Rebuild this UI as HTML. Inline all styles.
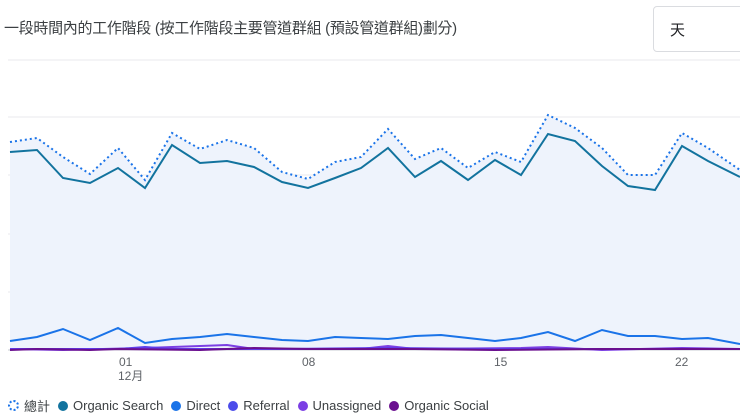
<!DOCTYPE html>
<html><head><meta charset="utf-8"><style>
body{margin:0;width:740px;height:418px;overflow:hidden;background:#fff;font-family:"Liberation Sans","Noto Sans CJK TC",sans-serif;}
.t{position:absolute;left:4px;top:17px;font-size:15px;color:#3c4043;letter-spacing:-0.3px;}
.sel{position:absolute;left:653px;top:6px;width:100px;height:46px;border:1px solid #dadce0;border-radius:4px;box-sizing:border-box;}
.sel span{position:absolute;left:16px;top:12px;font-size:15px;color:#202124;}
.lg{position:absolute;top:396px;left:6px;font-size:13px;color:#3c4043;display:flex;align-items:center;}
.lg i{display:inline-block;width:10px;height:10px;border-radius:50%;margin:0 5px 0 8px;}
</style></head><body>
<div class="t">一段時間內的工作階段 (按工作階段主要管道群組 (預設管道群組)劃分)</div>
<div class="sel"><span>天</span></div>
<svg width="740" height="418" style="position:absolute;left:0;top:0">
<line x1="8" y1="60" x2="740" y2="60" stroke="#e8eaed"/>
<line x1="8" y1="117" x2="740" y2="117" stroke="#e8eaed"/>
<line x1="8" y1="175" x2="740" y2="175" stroke="#e8eaed"/>
<line x1="8" y1="234" x2="740" y2="234" stroke="#e8eaed"/>
<line x1="8" y1="292" x2="740" y2="292" stroke="#e8eaed"/>
<polygon fill="#eef3fc" points="10,142 37,138 63,157 90,174 118,148 145,180 172,133 200,149 227,140 254,148 282,172 308,179 335,162 361,157 388,129 415,159 441,148 468,168 495,152 521,162 548,115 575,128 602,148 628,175 655,175 682,133 708,148 740,170 740,350 10,350"/>
<line x1="8" y1="350" x2="740" y2="350" stroke="#c8cdd3"/>
<polyline fill="none" stroke="#1a73e8" stroke-width="2" stroke-dasharray="2,3" points="10,142 37,138 63,157 90,174 118,148 145,180 172,133 200,149 227,140 254,148 282,172 308,179 335,162 361,157 388,129 415,159 441,148 468,168 495,152 521,162 548,115 575,128 602,148 628,175 655,175 682,133 708,148 740,170"/>
<polyline fill="none" stroke="#12739e" stroke-width="2" points="10,152 37,150 63,178 90,183 118,168 145,188 172,145 200,163 227,161 254,167 282,182 308,188 335,178 361,168 388,148 415,177 441,161 468,180 495,160 521,175 548,134 575,141 602,166 628,186 655,190 682,146 708,161 740,177"/>
<polyline fill="none" stroke="#1a73e8" stroke-width="2" points="10,341 37,337 63,329 90,340 118,328 145,343 172,339 200,337 227,334 254,337 282,340 308,341 335,337 361,338 388,339 415,336 441,335 468,338 495,341 521,338 548,332 575,341 602,330 628,336 655,336 682,339 708,338 740,344"/>
<polyline fill="none" stroke="#7b3fe4" stroke-width="2" points="10,349 63,350 145,348 200,346 227,345 254,349 361,349 388,346 415,349 521,348 548,347 602,350 682,348 740,349"/>
<polyline fill="none" stroke="#5f3dea" stroke-width="2" points="10,349 118,349 145,347 172,349 282,349 388,348 495,349 602,349 740,349"/>
<polyline fill="none" stroke="#6a0f8f" stroke-width="2" points="10,350 37,349 90,350 118,349 200,350 254,348 308,349 415,349 495,350 602,349 740,349"/>
<g font-size="12" fill="#5f6368" font-family="Liberation Sans,Noto Sans CJK TC,sans-serif">
<text x="119" y="366">01</text><text x="118" y="380">12月</text>
<text x="302" y="366">08</text><text x="494" y="366">15</text><text x="675" y="366">22</text>
</g>
</svg>
<div class="lg"><i style="border:2px dotted #1a73e8;width:7px;height:7px;background:#fff;margin-left:2px"></i>總計<i style="background:#12739e"></i>Organic Search<i style="background:#1a73e8"></i>Direct<i style="background:#4b4cea"></i>Referral<i style="background:#7b3fe4"></i>Unassigned<i style="background:#6a0f8f"></i>Organic Social</div>
</body></html>
